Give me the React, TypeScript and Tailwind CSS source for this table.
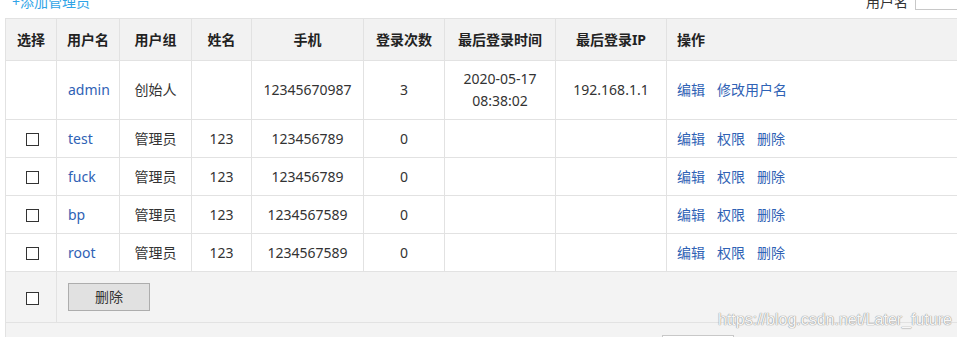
import React from 'react';

type User = {
  name: string;
  group: string;
  realName: string;
  phone: string;
  logins: string;
};

const users: User[] = [
  { name: 'test', group: '管理员', realName: '123', phone: '123456789', logins: '0' },
  { name: 'fuck', group: '管理员', realName: '123', phone: '123456789', logins: '0' },
  { name: 'bp', group: '管理员', realName: '123', phone: '1234567589', logins: '0' },
  { name: 'root', group: '管理员', realName: '123', phone: '1234567589', logins: '0' },
];

const cell = 'border border-[#e2e2e2] text-center align-middle p-0';
const head = 'border border-[#e2e2e2] text-center align-middle p-0 bg-[#f2f2f2] font-bold text-[#222]';
const link = 'text-[#2f62b5] no-underline';

function Box() {
  return <span className="inline-block align-middle w-[13px] h-[13px] border border-[#333] bg-white" />;
}

export default function App() {
  return (
    <div className="relative w-full h-[337px] overflow-hidden bg-white text-[14px] text-[#333] font-['Noto_Sans','Noto_Sans_CJK_SC',sans-serif]">
      <div className="w-[1040px]">
        {/* Toolbar (scrolled partly out of view) */}
        <div className="-mt-[8px] h-[26px] flex items-start justify-between pl-[12px]">
          <a className="leading-[20px] text-[#2fa4e7]">+添加管理员</a>
          <div className="flex items-start gap-[7px]">
            <span className="leading-[20px] text-[#333]">用户名</span>
            <input className="w-[125px] h-[18px] border border-[#c8c8c8] bg-white outline-none" />
          </div>
        </div>

        <div className="ml-[5px]">
          <table className="w-full table-fixed border-collapse leading-[22px]">
            <colgroup>
              <col className="w-[51px]" />
              <col className="w-[63px]" />
              <col className="w-[72px]" />
              <col className="w-[60px]" />
              <col className="w-[112px]" />
              <col className="w-[81px]" />
              <col className="w-[111px]" />
              <col className="w-[111px]" />
              <col />
            </colgroup>
            <thead>
              <tr className="h-[42px]">
                <th className={head}>选择</th>
                <th className={head}>用户名</th>
                <th className={head}>用户组</th>
                <th className={head}>姓名</th>
                <th className={head}>手机</th>
                <th className={head}>登录次数</th>
                <th className={head}>最后登录时间</th>
                <th className={head}>最后登录IP</th>
                <th className={head + ' !text-left pl-[10px]'}>操作</th>
              </tr>
            </thead>
            <tbody>
              <tr className="h-[59px]">
                <td className={cell}></td>
                <td className={cell + ' !text-left pl-[11px]'}>
                  <a className={link}>admin</a>
                </td>
                <td className={cell}>创始人</td>
                <td className={cell}></td>
                <td className={cell}>12345670987</td>
                <td className={cell}>3</td>
                <td className={cell}>
                  2020-05-17
                  <br />
                  08:38:02
                </td>
                <td className={cell}>192.168.1.1</td>
                <td className={cell + ' !text-left pl-[10px]'}>
                  <a className={link + ' mr-[12px]'}>编辑</a>
                  <a className={link}>修改用户名</a>
                </td>
              </tr>
              {users.map((u) => (
                <tr key={u.name} className="h-[38px]">
                  <td className={cell + ' !text-left pl-[20px]'}>
                    <Box />
                  </td>
                  <td className={cell + ' !text-left pl-[11px]'}>
                    <a className={link}>{u.name}</a>
                  </td>
                  <td className={cell}>{u.group}</td>
                  <td className={cell}>{u.realName}</td>
                  <td className={cell}>{u.phone}</td>
                  <td className={cell}>{u.logins}</td>
                  <td className={cell}></td>
                  <td className={cell}></td>
                  <td className={cell + ' !text-left pl-[10px]'}>
                    <a className={link + ' mr-[12px]'}>编辑</a>
                    <a className={link + ' mr-[12px]'}>权限</a>
                    <a className={link}>删除</a>
                  </td>
                </tr>
              ))}
              <tr className="h-[51px] bg-[#f3f3f3]">
                <td className={cell + ' !text-left pl-[20px]'}>
                  <Box />
                </td>
                <td colSpan={8} className={cell + ' !text-left pl-[11px]'}>
                  <button className="w-[82px] h-[28px] bg-[#e1e1e1] border border-[#adadad] text-[14px] text-[#333] leading-none">
                    删除
                  </button>
                </td>
              </tr>
            </tbody>
          </table>

          {/* Pager area */}
          <div className="h-[40px] border-l border-[#e2e2e2] bg-[#f3f3f3] pt-[12px] pl-[656px]">
            <div className="w-[72px] h-[26px] border border-[#c8c8c8] bg-white" />
          </div>
        </div>
      </div>

      {/* Watermark */}
      <span className="absolute left-[718px] top-[312px] leading-none text-[16px] text-[#f7f7f7] font-['Liberation_Sans',sans-serif] [text-shadow:0_0_1px_#8a8a8a,0_0_1px_#8a8a8a]">
        https://blog.csdn.net/Later_future
      </span>
    </div>
  );
}
